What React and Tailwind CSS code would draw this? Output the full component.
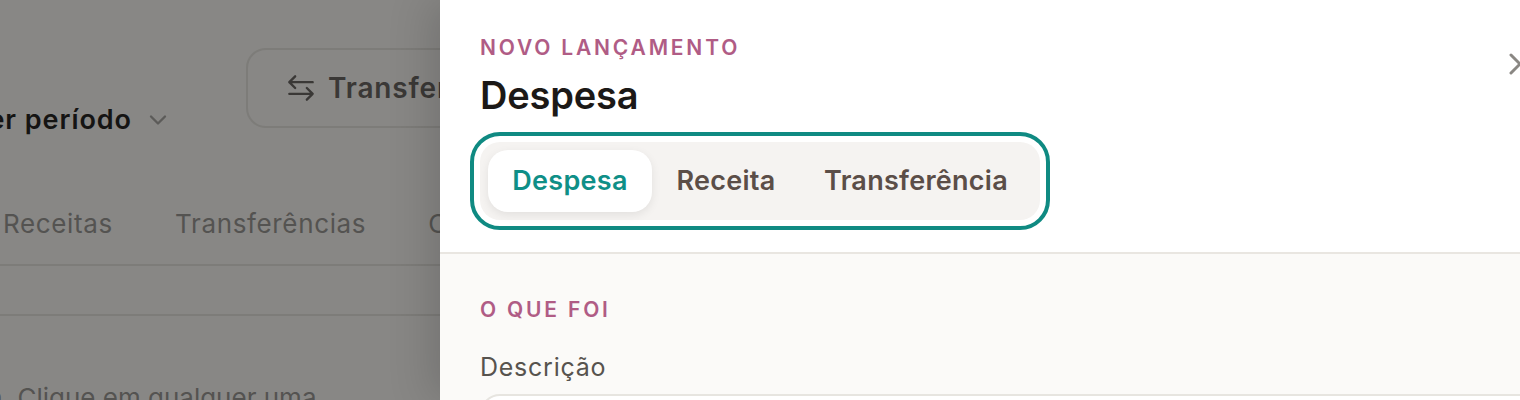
import { ChevronDown, X } from "lucide-react";

const font = "font-['Inter',sans-serif]";

function BackgroundPage() {
  return (
    <div className="w-[440px] shrink-0 h-full overflow-hidden bg-[#888785]">
      <div className="flex items-start h-[134px] pt-[48px]">
        <div className="flex items-center gap-[12px] ml-[-26px] mt-[52px] w-[198px] shrink-0 justify-end">
          <span className="text-[27px] leading-[40px] tracking-[0.035em] font-semibold text-[#151413] whitespace-nowrap">ver período</span>
          <ChevronDown size={28} strokeWidth={2} className="text-[#5c5b59] shrink-0" />
        </div>
        <div className="ml-[74px] flex items-center gap-[13px] shrink-0 h-[80px] w-[400px] pl-[39px] border-2 border-[#7d7c79] rounded-[20px]">
          <svg width="28" height="28" viewBox="0 0 24 24" fill="none" stroke="currentColor" strokeWidth="2" strokeLinecap="round" strokeLinejoin="round" className="text-[#3a3836] shrink-0">
            <path d="M2 7h20M7 2 2 7l5 5" />
            <path d="M22 17H2m15-5 5 5-5 5" />
          </svg>
          <span className="text-[28px] tracking-[0.03em] font-semibold text-[#3a3836]">Transferir</span>
        </div>
      </div>
      <div className="pl-[3px] pt-[74px] pb-[24px] flex gap-[62px] text-[26px] leading-[32px] tracking-[0.025em] text-[#545351] whitespace-nowrap border-b-2 border-[#7d7c79]">
        <span>Receitas</span>
        <span>Transferências</span>
        <span>Contas</span>
      </div>
      <div className="h-[50px] border-b-2 border-[#7d7c79]" />
      <p className="mt-[66px] ml-[-12px] text-[26px] leading-[32px] text-[#545351] whitespace-nowrap">a. Clique em qualquer uma</p>
    </div>
  );
}

function Tabs() {
  return (
    <div className="flex w-[560px] h-[78px] p-[8px] rounded-[20px] bg-[#f5f3f1] outline-4 outline-offset-[6px] outline-[#0f8a82] outline-solid">
      <button className="w-[164px] h-[62px] rounded-[20px] bg-white shadow-[0_3px_10px_rgba(0,0,0,0.08)] text-[27px] tracking-[0.01em] font-semibold text-[#0f8f87]">Despesa</button>
      <button className="w-[148px] h-[62px] text-[27px] tracking-[0.01em] font-semibold text-[#5b4e48]">Receita</button>
      <button className="w-[232px] h-[62px] text-[27px] tracking-[0.01em] font-semibold text-[#5b4e48]">Transferência</button>
    </div>
  );
}

export default function App() {
  return (
    <div className={`flex w-[1520px] h-[400px] overflow-hidden ${font}`}>
      <BackgroundPage />
      <div className="w-[1100px] shrink-0 h-full flex flex-col bg-[#fbfaf8] shadow-[-10px_0_40px_rgba(0,0,0,0.15)] relative">
        <header className="h-[254px] shrink-0 bg-white border-b-2 border-[#e9e6e1] pl-[40px] pr-[2px] pt-[32px] flex justify-between items-start">
          <div>
            <p className="text-[21px] leading-[32px] font-semibold tracking-[0.134em] text-[#b05c85]">NOVO LANÇAMENTO</p>
            <h2 className="text-[38px] leading-[46px] mt-[8px] font-semibold tracking-[-0.005em] text-[#1c1917]">Despesa</h2>
            <div className="mt-[24px]"><Tabs /></div>
          </div>
          <button className="text-[#8a8783]"><X size={36} strokeWidth={2} className="mt-[14px]" /></button>
        </header>
        <section className="pl-[40px] pt-[40px]">
          <p className="text-[21px] leading-[32px] font-semibold tracking-[0.134em] text-[#b05c85]">O QUE FOI</p>
          <p className="mt-[23px] text-[25px] leading-[36px] tracking-[0.03em] text-[#57534e]">Descrição</p>
          <div className="mt-[9px] h-[60px] w-[1060px] rounded-[20px] border-2 border-[#e7e5e0] bg-white" />
        </section>
      </div>
    </div>
  );
}
